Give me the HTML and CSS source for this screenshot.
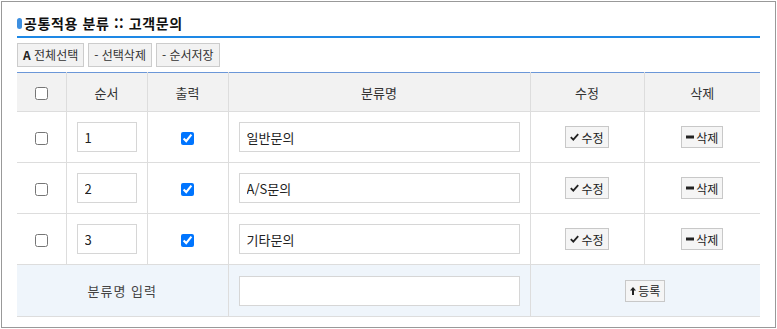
FILE: index.html
```html
<!DOCTYPE html>
<html lang="ko">

<head>
    <meta charset="UTF-8">
    <meta name="viewport" content="width=device-width, initial-scale=1.0">
    <title>공통적용 분류 :: 고객문의</title>
    <link rel="stylesheet" href="styles.css">
</head>

<body>

    <div class="box">
        <!-- Title -->
        <div class="title"><span class="bullet"></span>공통적용 분류 :: 고객문의</div>

        <!-- Toolbar -->
        <div class="toolbar">
            <button class="tool-btn"><b>A</b> 전체선택</button>
            <button class="tool-btn">- 선택삭제</button>
            <button class="tool-btn">- 순서저장</button>
        </div>

        <!-- Category List -->
        <table class="cate-table">
            <colgroup>
                <col style="width:49px">
                <col style="width:81px">
                <col style="width:81px">
                <col style="width:302px">
                <col style="width:114px">
                <col>
            </colgroup>
            <thead>
                <tr>
                    <th><input type="checkbox"></th>
                    <th>순서</th>
                    <th>출력</th>
                    <th>분류명</th>
                    <th>수정</th>
                    <th>삭제</th>
                </tr>
            </thead>
            <tbody id="cate-rows"></tbody>
            <tfoot>
                <tr class="add-row">
                    <td colspan="3" class="add-label">분류명 입력</td>
                    <td><input type="text" class="name-input"></td>
                    <td colspan="2">
                        <button class="small-btn">
                            <svg width="6" height="8" viewBox="0 0 6 8"><path d="M3 0L6 3.5H4V8H2V3.5H0Z" fill="#222"/></svg>등록
                        </button>
                    </td>
                </tr>
            </tfoot>
        </table>
    </div>

    <script>
        let categories = ["일반문의", "A/S문의", "기타문의"];

        function loadRows() {
            let body = document.getElementById("cate-rows");
            body.innerHTML = "";
            categories.forEach((name, index) => {
                body.innerHTML += `
                    <tr>
                        <td><input type="checkbox"></td>
                        <td><input type="text" class="order-input" value="${index + 1}"></td>
                        <td><input type="checkbox" checked></td>
                        <td><input type="text" class="name-input" value="${name}"></td>
                        <td><button class="small-btn"><svg width="9" height="8" viewBox="0 0 9 8"><path d="M0.8 4.2L3.3 6.6L8.2 1.2" fill="none" stroke="#222" stroke-width="1.8"/></svg>수정</button></td>
                        <td><button class="small-btn"><svg width="8" height="4" viewBox="0 0 8 4"><rect x="0" y="0.5" width="8" height="3" fill="#222"/></svg>삭제</button></td>
                    </tr>
                `;
            });
        }

        loadRows();
    </script>

</body>

</html>
```

FILE: styles.css
```css
body {
    font-family: "Noto Sans CJK KR", "Liberation Sans", sans-serif;
    background: #fff;
    margin: 0;
    color: #333;
}

.box {
    margin: 1px 1px 0 1px;
    border: 1px solid #999;
    padding: 11px 15px 9px 15px;
    height: 305px;
}

/* Title */
.title {
    font-size: 14px;
    font-weight: bold;
    color: #111;
    line-height: 20px;
    letter-spacing: 0.6px;
    padding-bottom: 3px;
    border-bottom: 2px solid #1e88e5;
    display: flex;
    align-items: center;
}

.bullet {
    display: inline-block;
    width: 5px;
    height: 11px;
    border-radius: 3px;
    background: #3d8fe0;
    margin-right: 2px;
}

/* Toolbar */
.toolbar {
    display: flex;
    gap: 4px;
    margin: 5px 0 5px 0;
}

.tool-btn {
    font-family: inherit;
    font-size: 12px;
    color: #333;
    height: 24px;
    padding: 0 5px;
    background: #f2f2f2;
    border: 1px solid #ccc;
    border-radius: 0;
    line-height: 22px;
}

.tool-btn b {
    color: #222;
}

/* Table */
.cate-table {
    width: 100%;
    border-collapse: collapse;
    table-layout: fixed;
    border-top: 1px solid #6b97d8;
    font-size: 13px;
}

.cate-table th,
.cate-table td {
    text-align: center;
    border-bottom: 1px solid #ddd;
    border-left: 1px solid #ddd;
    padding: 0 10px;
}

.cate-table th:first-child,
.cate-table td:first-child {
    border-left: none;
}

.cate-table th {
    background: #f2f2f2;
    font-weight: normal;
    height: 38px;
    color: #333;
}

.cate-table td {
    height: 50px;
}

.cate-table input[type="checkbox"] {
    margin: 0;
    width: 13px;
    height: 13px;
    vertical-align: middle;
}

.order-input,
.name-input {
    font-family: inherit;
    font-size: 13px;
    color: #222;
    height: 30px;
    box-sizing: border-box;
    border: 1px solid #d6d6d6;
    padding: 0 7px;
    display: block;
    width: 100%;
    outline: none;
}

.small-btn {
    font-family: inherit;
    font-size: 12px;
    color: #222;
    height: 22px;
    padding: 0 4px;
    background: #f5f5f5;
    border: 1px solid #c8c8c8;
    border-radius: 0;
    display: inline-flex;
    align-items: center;
    gap: 2px;
    vertical-align: middle;
}

/* Add Row */
.add-row td {
    background: #eff5fb;
    height: 51px;
}

.add-label {
    color: #444;
    letter-spacing: 1px;
}
```
